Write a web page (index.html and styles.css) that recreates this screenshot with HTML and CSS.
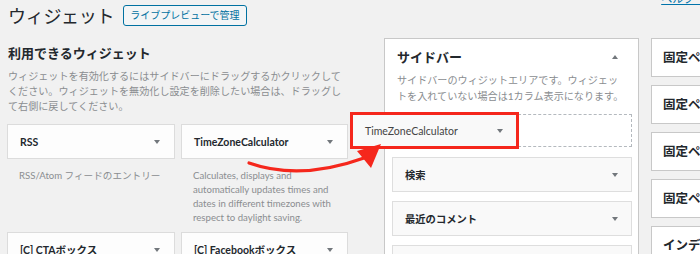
FILE: index.html
```html
<!DOCTYPE html>
<html lang="ja">
<head>
<meta charset="utf-8">
<title>ウィジェット</title>
<link rel="stylesheet" href="styles.css">
</head>
<body>
<div class="page">
  <header class="head">
    <h1 class="title">ウィジェット</h1>
    <a class="btn">ライブプレビューで管理</a>
    <a class="help">ヘルプ ▼</a>
  </header>
  <div class="cols">
    <section class="avail">
      <h2 class="avail-title">利用できるウィジェット</h2>
      <p class="avail-desc">ウィジェットを有効化するにはサイドバーにドラッグするかクリックしてください。ウィジェットを無効化し設定を削除したい場合は、ドラッグして右側に戻してください。</p>
      <div class="grid">
        <div class="item">
          <div class="card"><span>RSS</span><i class="tri"></i></div>
          <p class="wdesc">RSS/Atom フィードのエントリー</p>
        </div>
        <div class="item">
          <div class="card"><span>TimeZoneCalculator</span><i class="tri"></i></div>
          <p class="wdesc">Calculates, displays and automatically updates times and dates in different timezones with respect to daylight saving.</p>
        </div>
        <div class="item">
          <div class="card"><span>[C] CTAボックス</span><i class="tri"></i></div>
        </div>
        <div class="item">
          <div class="card"><span>[C] Facebookボックス</span><i class="tri"></i></div>
        </div>
      </div>
    </section>
    <section class="sidebar">
      <div class="sb-head"><h2 class="sb-title">サイドバー</h2><i class="tri up"></i></div>
      <p class="sb-desc">サイドバーのウィジットエリアです。ウィジェットを入れていない場合は1カラム表示になります。</p>
      <div class="sb-list">
        <div class="placeholder"></div>
        <div class="card sb-card"><span>検索</span><i class="tri"></i></div>
        <div class="card sb-card"><span>最近のコメント</span><i class="tri"></i></div>
        <div class="card sb-card"><span>最近の投稿</span><i class="tri"></i></div>
      </div>
    </section>
    <section class="others">
      <div class="panel">固定ページ上部</div>
      <div class="panel">固定ページ下部</div>
      <div class="panel">固定ページ本文上</div>
      <div class="panel">固定ページ本文下</div>
      <div class="panel">インデックス上部</div>
    </section>
  </div>
  <div class="drag"><div class="drag-card"><span>TimeZoneCalculator</span><i class="tri"></i></div></div>
  <svg class="arrow" width="700" height="254" viewBox="0 0 700 254">
    <path d="M249 163 Q300 181 364 158" fill="none" stroke="#f5271c" stroke-width="3.2" stroke-linecap="round"/>
    <polygon points="381,144 357,151 371,168" fill="#f5271c"/>
  </svg>
</div>
</body>
</html>
```
FILE: styles.css
```css
* { box-sizing: border-box; }
html, body {
  margin: 0;
  padding: 0;
  background: #f1f1f1;
  overflow: hidden;
}
body {
  font-family: "Lato", "Noto Sans CJK JP", sans-serif;
  color: #23282d;
}
.page {
  position: relative;
  width: 700px;
  height: 254px;
  overflow: hidden;
}
.head {
  display: flex;
  align-items: flex-start;
  padding: 5px 0 0 8px;
  height: 27px;
}
.title {
  margin: 0;
  font-size: 18px;
  line-height: 22px;
  font-weight: 400;
  color: #23282d;
  letter-spacing: -0.3px;
}
.btn {
  margin-left: 9px;
  height: 21px;
  padding: 0 6px;
  border: 1px solid #0071a1;
  border-radius: 3px;
  background: #f3f5f6;
  color: #0071a1;
  font-size: 10px;
  line-height: 19px;
  white-space: nowrap;
}
.help {
  margin-left: auto;
  margin-top: -14px;
  margin-right: -8px;
  font-size: 11px;
  line-height: 16px;
  color: #0073aa;
  text-decoration: underline;
  white-space: nowrap;
}
.cols {
  display: flex;
  align-items: flex-start;
  margin-top: 11px;
  padding-left: 7px;
}
.avail {
  width: 341px;
  flex: none;
}
.avail-title {
  margin: 7px 0 0 1px;
  font-size: 13px;
  line-height: 16px;
  font-weight: 700;
}
.avail-desc {
  margin: 8px 0 0 1px;
  width: 340px;
  font-size: 10.1px;
  line-height: 15px;
  color: #8a8d90;
}
.grid {
  display: grid;
  grid-template-columns: 168px 167px;
  column-gap: 6px;
  row-gap: 7px;
  margin-top: 10px;
}
.card {
  display: flex;
  align-items: center;
  justify-content: space-between;
  height: 35px;
  padding: 0 14px 0 12px;
  background: #fdfdfd;
  border: 1px solid #dcdcdc;
  font-size: 10.5px;
  font-weight: 700;
  color: #23282d;
  white-space: nowrap;
}
.tri {
  display: block;
  width: 0;
  height: 0;
  border-left: 3.5px solid transparent;
  border-right: 3.5px solid transparent;
  border-top: 4px solid #72777c;
}
.tri.up {
  border-top: 0;
  border-bottom: 4px solid #72777c;
}
.wdesc {
  margin: 0;
  padding: 10px 8px 0 12px;
  font-size: 9.6px;
  line-height: 14px;
  color: #8a8d90;
}
.sidebar {
  flex: none;
  width: 255px;
  height: 230px;
  margin-left: 36px;
  background: #fff;
  border: 1px solid #c8c8c8;
  padding: 0 6px 0 7px;
}
.sb-head {
  display: flex;
  align-items: center;
  justify-content: space-between;
  padding: 10px 14px 0 5px;
}
.sb-title {
  margin: 0;
  font-size: 13px;
  line-height: 16px;
  font-weight: 700;
}
.sb-desc {
  margin: 7px 8px 0 5px;
  font-size: 10.1px;
  line-height: 16px;
  color: #8a8d90;
}
.sb-list {
  display: flex;
  flex-direction: column;
  gap: 9px;
  margin-top: 10px;
}
.placeholder {
  height: 33px;
  border: 1px dashed #b4b9be;
  margin-bottom: 1px;
}
.sb-card {
  height: 35px;
  background: #f9f9f9;
  border-color: #dedede;
  font-size: 10.3px;
  padding-right: 13px;
}
.others {
  flex: none;
  width: 80px;
  margin-left: 12px;
  display: flex;
  flex-direction: column;
  gap: 8px;
}
.panel {
  height: 39px;
  background: #fff;
  border: 1px solid #c8c8c8;
  padding-left: 11px;
  font-size: 12.5px;
  font-weight: 700;
  line-height: 37px;
  white-space: nowrap;
  overflow: hidden;
}
.drag {
  position: absolute;
  left: 350px;
  top: 112px;
  width: 169px;
  height: 37px;
  border: 3px solid #f5271c;
}
.drag-card {
  display: flex;
  align-items: center;
  justify-content: space-between;
  height: 100%;
  padding: 0 13px 0 12px;
  background: #f9f9f9;
  font-size: 10.5px;
  font-weight: 400;
  color: #444;
  white-space: nowrap;
}
.arrow {
  position: absolute;
  left: 0;
  top: 0;
  pointer-events: none;
}
```
